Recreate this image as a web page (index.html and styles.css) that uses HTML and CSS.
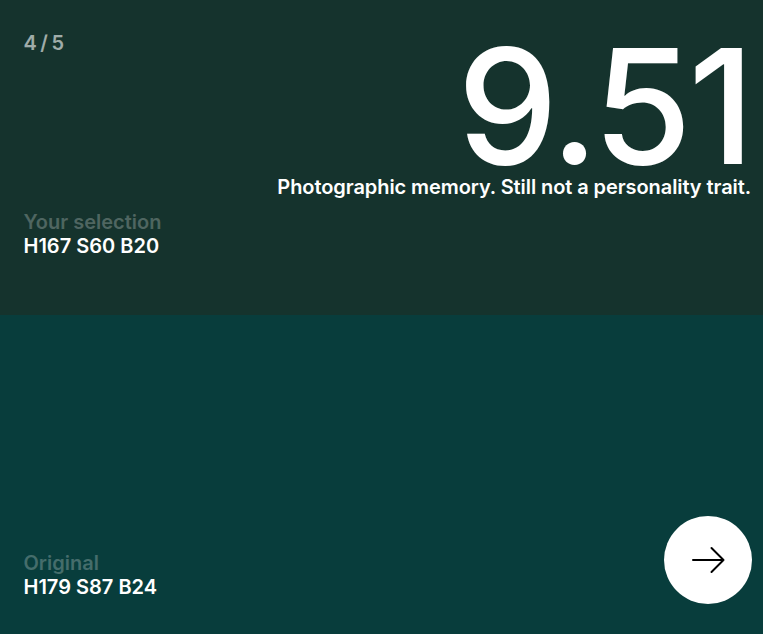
FILE: index.html
```html
<!DOCTYPE html>
<html lang="en">
<head>
<meta charset="utf-8">
<title>Result</title>
<link rel="stylesheet" href="styles.css">
</head>
<body>
<main class="app">
  <section class="panel panel-selection">
    <div class="left">
      <div class="progress">4 / 5</div>
      <div class="info">
        <div class="label">Your selection</div>
        <div class="value">H167 S60 B20</div>
      </div>
    </div>
    <div class="result">
      <div class="score">9.51</div>
      <div class="message">Photographic memory. Still not a personality trait.</div>
    </div>
  </section>
  <section class="panel panel-original">
    <div class="info info-original">
      <div class="label">Original</div>
      <div class="value">H179 S87 B24</div>
    </div>
    <button class="next" aria-label="Next">
      <svg width="34" height="28" viewBox="0 0 34 28" fill="none" stroke="#000" stroke-width="2" stroke-linecap="round" stroke-linejoin="round"><path d="M2 14H32.500M20.500 2L32.500 14L20.500 26"/></svg>
    </button>
  </section>
</main>
</body>
</html>
```
FILE: styles.css
```css
* { box-sizing: border-box; }
html, body { margin: 0; height: 100%; }
body { font-family: Inter, sans-serif; color: #fff; overflow: hidden; }
.app { display: flex; flex-direction: column; height: 634px; }
.panel { display: flex; justify-content: space-between; }
.panel-selection { height: 315px; background: #15332d; padding: 31px 12px 57px 24px; }
.panel-original { height: 319px; background: #083d3c; padding: 0 11px 30px 24px; align-items: flex-end; }
.left { display: flex; flex-direction: column; justify-content: space-between; }
.info-original { margin-bottom: 5px; }
.progress { font-size: 20px; font-weight: 600; line-height: 24px; color: rgba(255,255,255,.6); word-spacing: -1.5px; margin-left: -0.5px; }
.label { font-size: 20px; font-weight: 600; line-height: 24px; color: rgba(255,255,255,.25); margin-left: -0.5px; }
.value { font-size: 20px; font-weight: 600; line-height: 24px; margin-left: -0.5px; }
.result { display: flex; flex-direction: column; align-items: flex-end; }
.score { font-size: 160px; font-weight: 500; line-height: 144px; letter-spacing: -3.7px; margin-top: 3px; margin-bottom: -3px; }
.message { font-size: 20px; font-weight: 600; line-height: 24px; letter-spacing: -0.08px; white-space: nowrap; }
.next { width: 88px; height: 88px; border: 0; border-radius: 50%; background: #fff; display: flex; align-items: center; justify-content: center; padding: 0; }
```
